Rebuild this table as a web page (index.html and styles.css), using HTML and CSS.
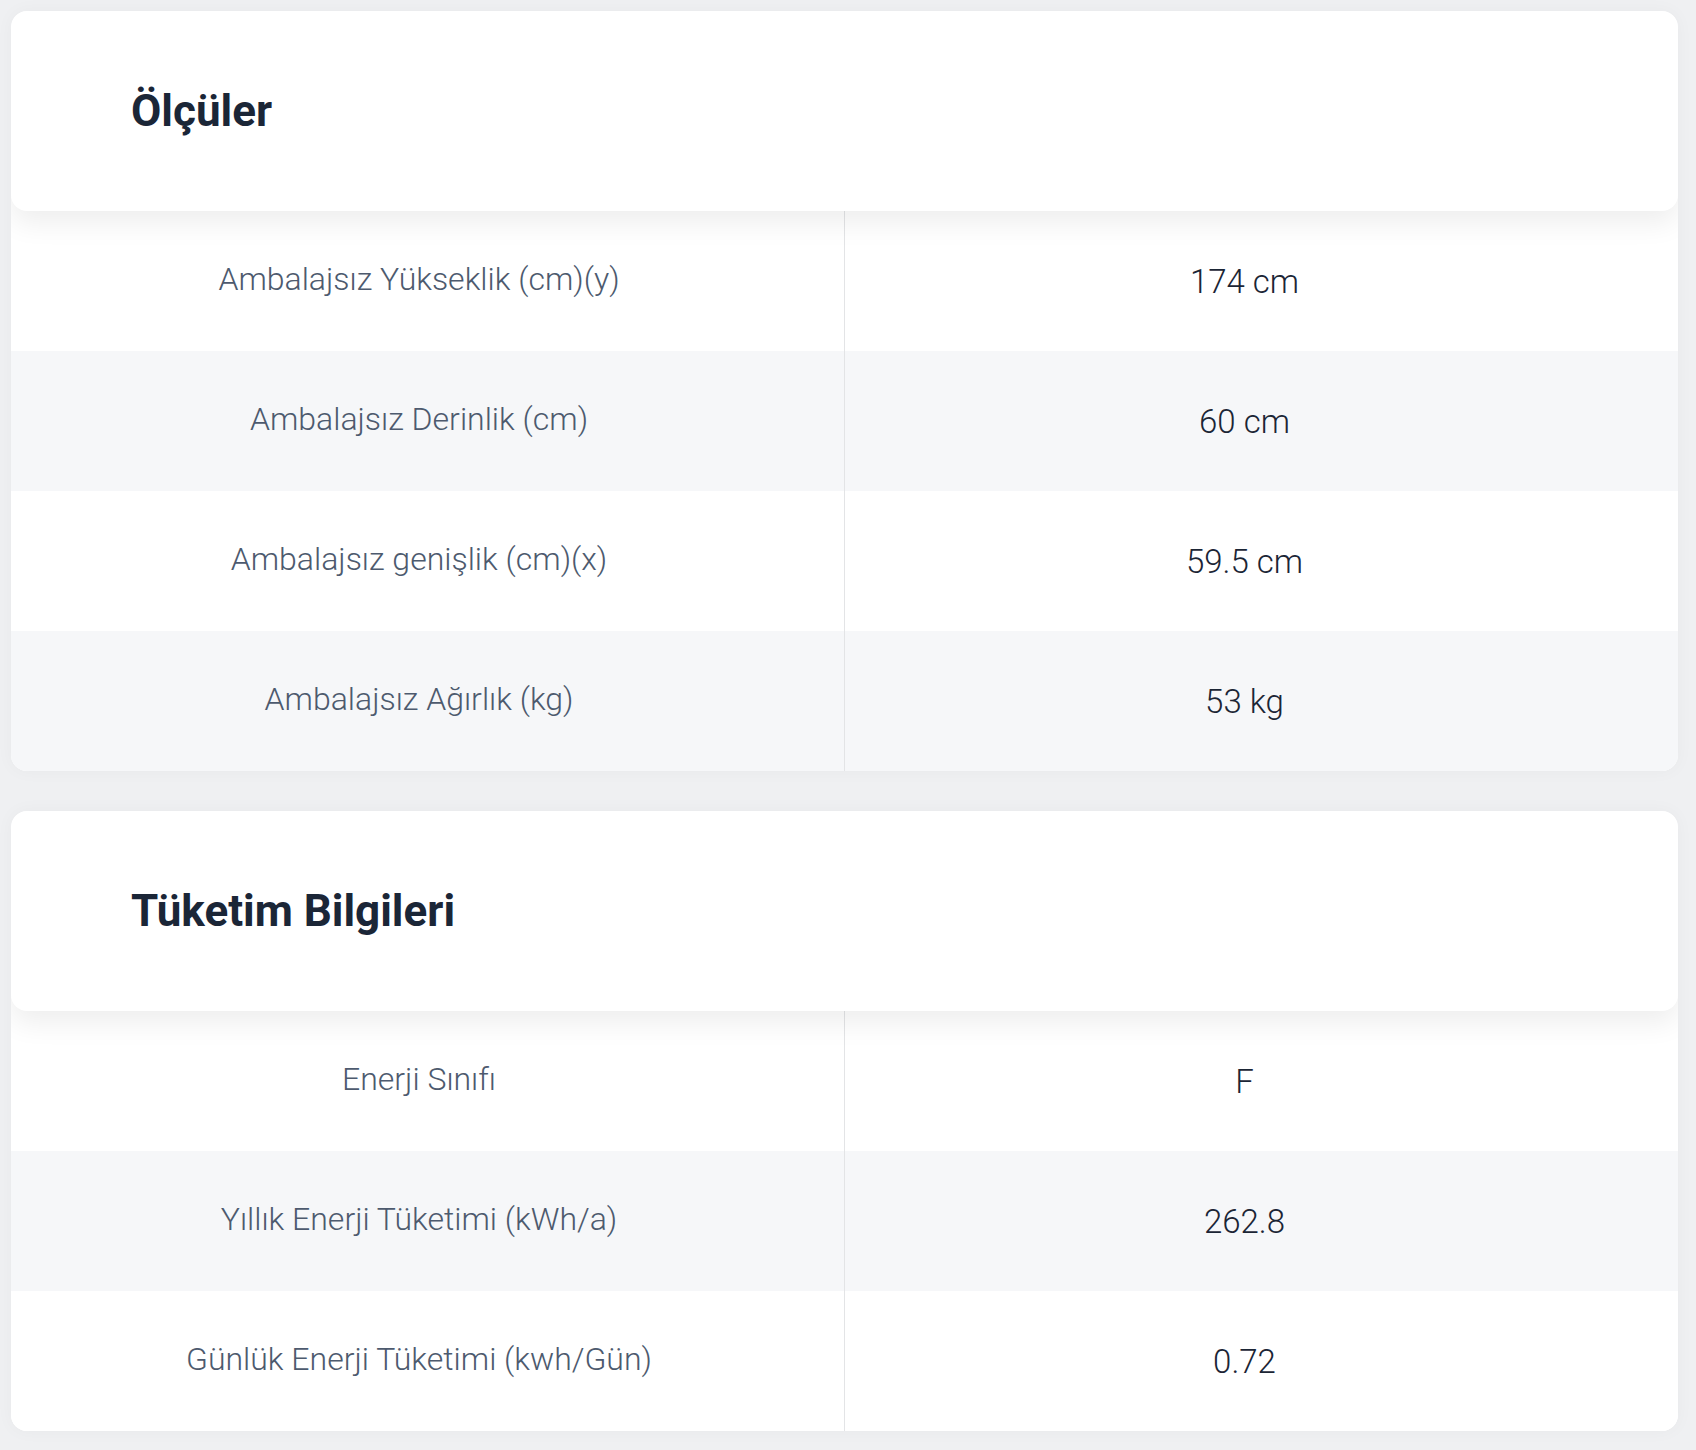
FILE: index.html
```html
<!DOCTYPE html>
<html lang="tr">
<head>
<meta charset="utf-8">
<title>Ölçüler</title>
<link rel="stylesheet" href="styles.css">
</head>
<body>
<main class="page">
  <section class="card">
    <header class="card-head"><h2 class="card-title">Ölçüler</h2></header>
    <table class="spec">
      <tbody>
        <tr><td class="spec-label">Ambalajsız Yükseklik (cm)(y)</td><td class="spec-value">174 cm</td></tr>
        <tr><td class="spec-label">Ambalajsız Derinlik (cm)</td><td class="spec-value">60 cm</td></tr>
        <tr><td class="spec-label">Ambalajsız genişlik (cm)(x)</td><td class="spec-value">59.5 cm</td></tr>
        <tr><td class="spec-label">Ambalajsız Ağırlık (kg)</td><td class="spec-value">53 kg</td></tr>
      </tbody>
    </table>
  </section>
  <section class="card">
    <header class="card-head"><h2 class="card-title">Tüketim Bilgileri</h2></header>
    <table class="spec">
      <tbody>
        <tr><td class="spec-label">Enerji Sınıfı</td><td class="spec-value">F</td></tr>
        <tr><td class="spec-label">Yıllık Enerji Tüketimi (kWh/a)</td><td class="spec-value">262.8</td></tr>
        <tr><td class="spec-label">Günlük Enerji Tüketimi (kwh/Gün)</td><td class="spec-value">0.72</td></tr>
      </tbody>
    </table>
  </section>
</main>
</body>
</html>
```

FILE: styles.css
```css
html, body {
  margin: 0;
  padding: 0;
}
body {
  background: #eff0f2;
  font-family: Roboto, "Liberation Sans", Arial, sans-serif;
}
.page {
  display: flex;
  flex-direction: column;
  gap: 40px;
  padding: 11px 18px 19px 11px;
}
.card {
  background: #ffffff;
  border-radius: 16px;
  overflow: hidden;
  box-shadow: 0 0 18px rgba(0, 0, 0, 0.035);
}
.card-head {
  position: relative;
  z-index: 1;
  height: 200px;
  display: flex;
  align-items: center;
  padding: 0 120px;
  background: #ffffff;
  border-radius: 16px;
  box-shadow: 0 12px 28px rgba(0, 0, 0, 0.07);
}
.card-title {
  margin: 0;
  font-size: 44px;
  line-height: 1.2;
  font-weight: 700;
  color: #1b2637;
}
.spec {
  width: 100%;
  border-collapse: collapse;
  table-layout: fixed;
}
.spec tr {
  height: 140px;
  background: #ffffff;
}
.spec tr:nth-child(even) {
  background: #f6f7f9;
}
.spec td {
  text-align: center;
  vertical-align: middle;
  font-weight: 300;
}
.spec-label {
  color: #4d5a6e;
  font-size: 32px;
  padding: 0 17px 4px 0;
}
.spec-value {
  color: #1b2535;
  font-size: 33px;
  border-left: 1px solid #e3e4e6;
  padding: 0 34px 0 0;
}
```
